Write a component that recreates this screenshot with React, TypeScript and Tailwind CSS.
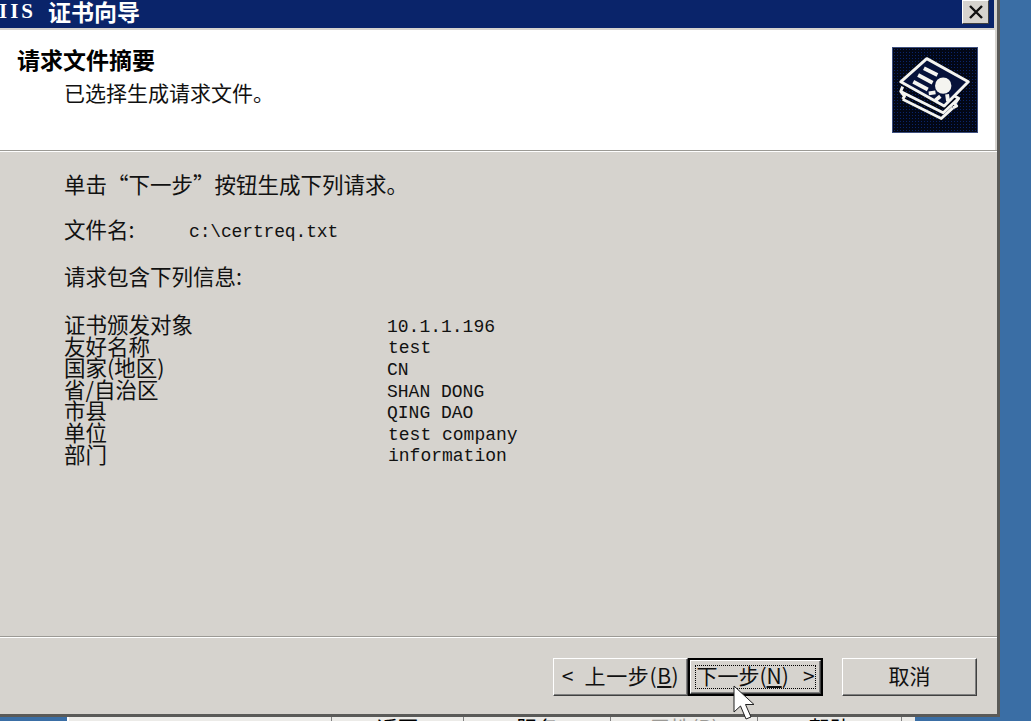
const cjk = "font-['Noto_Sans_CJK_SC','Liberation_Sans',sans-serif]";
const mono = "font-['Liberation_Mono',monospace]";

const rows = [
  ["证书颁发对象", "10.1.1.196", "-ml-px"],
  ["友好名称", "test", ""],
  ["国家(地区)", "CN", "-ml-px"],
  ["省/自治区", "SHAN DONG", "-ml-px"],
  ["市县", "QING DAO", "-ml-px"],
  ["单位", "test company", ""],
  ["部门", "information", ""],
];

function CertIcon() {
  return (
    <div className="w-[86px] h-[86px] bg-[#06123a] bg-[radial-gradient(#0a246a_1px,#020716_1px)] bg-[length:3px_3px] border border-[#3d4f80]">
      <svg viewBox="0 0 87 87" className="w-full h-full" fill="none" stroke="#f4f4f0" strokeWidth="3" strokeLinejoin="round">
        <path d="M10 53 L50 73 L62 62" />
        <path d="M8 45 L52 67 L68 52" />
        <path d="M8 35 L35 11 L78 35 L53 60 Z" fill="#06123a" />
        <path d="M10 40 L8 45 L12 50 L10 53" />
        <path d="M64 50 L68 52 L64 58 L66 60 L62 62" strokeWidth="3" />
        <path d="M32 21 L46 28 M26 28 L41 36 M21 35 L36 43" strokeWidth="4" />
        <path d="M44 46 L37 47 M49 50 L44 54 M56 48 L57 55" strokeWidth="4" />
        <circle cx="52" cy="39" r="8.5" fill="#f4f4f0" stroke="none" />
      </svg>
    </div>
  );
}

function Btn({ children, className = "" }: { children: React.ReactNode; className?: string }) {
  return (
    <div className={`h-[38px] pb-[3px] flex items-center justify-center bg-[#d6d3ce] border border-t-white border-l-white border-r-[#404040] border-b-[#404040] shadow-[inset_-1px_-1px_0_#808080] text-[21px] leading-none text-[#111] ${className}`}>
      {children}
    </div>
  );
}

export default function App() {
  return (
    <div className={`w-[1031px] h-[721px] overflow-hidden bg-[#3a6ea5] flex flex-col ${cjk} text-[#111]`}>
      {/* Wizard window */}
      <div className="w-[1000px] h-[717px] shrink-0 flex flex-col bg-[#d6d3ce] border-r-[3px] border-b-[3px] border-[#5a5a58]">
        <div className="h-[28px] shrink-0 bg-[#0a246a] flex items-center pb-[6px] pr-[5px] mr-[3px] overflow-hidden">
          <span className="w-[49px] -ml-px text-white font-bold text-[21px] tracking-[3px] leading-none font-['Liberation_Serif',serif]">IIS</span>
          <span className="text-white font-bold text-[23px] leading-none">证书向导</span>
          <div className="ml-auto w-[27px] h-[24px] mt-[2px] bg-[#d6d3ce] border border-t-white border-l-white border-r-[#404040] border-b-[#404040] flex items-center justify-center">
            <svg viewBox="0 0 16 14" className="w-[16px] h-[14px]" stroke="#111" strokeWidth="2.4"><path d="M2 1 L14 13 M14 1 L2 13" /></svg>
          </div>
        </div>
        <div className="h-[120px] shrink-0 mt-[2px] mr-[2px] bg-white flex pl-[17px] pr-[17px]">
          <div className="flex-1 pt-[16px]">
            <div className="font-bold text-[23px] leading-[26px] text-black">请求文件摘要</div>
            <div className="pl-[47px] mt-[7px] text-[21px] leading-[26px]">已选择生成请求文件。</div>
          </div>
          <div className="pt-[17px]"><CertIcon /></div>
        </div>
        <div className="h-[2px] shrink-0 bg-[#9c9a95] border-b border-white"></div>
        <div className="flex-1 pl-[64px] pt-[19px] text-[21.5px] leading-[26px]">
          <div>单击“下一步”按钮生成下列请求。</div>
          <div className="flex mt-[19px]">
            <span className="w-[125px]">文件名:</span>
            <span className={`${mono} pt-[3px] text-[18px] tracking-[-0.15px]`}>c:\certreq.txt</span>
          </div>
          <div className="mt-[18px]">请求包含下列信息:</div>
          <div className="mt-[26px] flex flex-col">
            {rows.map(([k, v, shift]) => (
              <div key={k} className="flex h-[21.6px] items-center">
                <span className="w-[324px] pb-[4px] leading-none">{k}</span>
                <span className={`${mono} pt-[2px] text-[18px] leading-none ${shift}`}>{v}</span>
              </div>
            ))}
          </div>
        </div>
        <div className="h-[2px] shrink-0 bg-[#9c9a95] border-b border-white"></div>
        <div className="h-[76px] shrink-0 flex pl-[553px] pt-[20px]">
          <Btn className="w-[135px]">
            <span className="whitespace-pre tracking-[0.6px]">&lt;  上一步(<u>B</u>)</span>
          </Btn>
          <div className="w-[135px] h-[38px] border-[2px] border-black flex">
            <Btn className="w-full h-full! relative">
              <span className="absolute inset-[4px] border border-dotted border-black"></span>
              <span className="whitespace-pre">下一步(<u>N</u>)   &gt;</span>
            </Btn>
          </div>
          <Btn className="w-[135px] ml-[19px]">取消</Btn>
        </div>
      </div>
      {/* Toolbar of the window behind, cut off by the edge of the shot */}
      <div className="h-[4px] w-[848px] ml-[67px] flex shrink-0 overflow-hidden bg-[#ecebe8] text-[21px] leading-[21px] text-black">
        <div className="w-[264px] border-l-[2px] border-white"></div>
        <div className="w-[132px] border-l border-[#808080] text-center">返回</div>
        <div className="w-[147px] border-l border-[#808080] text-center">服务</div>
        <div className="w-[147px] border-l border-[#808080] text-center text-[#9c9a95]">属性(P)</div>
        <div className="w-[144px] border-l border-[#808080] text-center">帮助</div>
        <div className="w-[14px] border-l border-[#808080]"></div>
      </div>
      {/* Mouse pointer */}
      <svg viewBox="0 0 24 36" className="absolute left-[733px] top-[685px] w-[24px] h-[36px]">
        <path d="M1 1 L1 27 L7.5 21 L13 34 L18 32 L12.5 19.5 L21 19.5 Z" fill="white" stroke="#222" strokeWidth="1" />
      </svg>
    </div>
  );
}
